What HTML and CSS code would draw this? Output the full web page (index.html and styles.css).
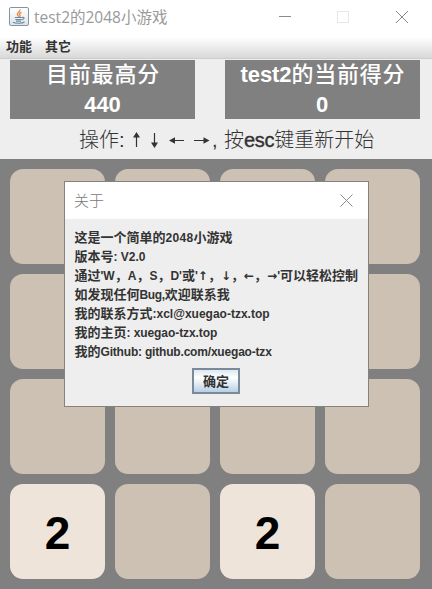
FILE: index.html
```html
<!DOCTYPE html>
<html lang="zh-CN">
<head>
<meta charset="utf-8">
<title>test2的2048小游戏</title>
<link rel="stylesheet" href="styles.css">
</head>
<body>
<div class="window">
  <header class="titlebar">
    <svg class="app-icon" viewBox="0 0 20 19">
      <defs><linearGradient id="g" x1="0" y1="0" x2="0" y2="1"><stop offset="0" stop-color="#fff"/><stop offset="1" stop-color="#dfe3e6"/></linearGradient></defs>
      <rect x=".5" y=".5" width="19" height="18" rx="1.5" fill="url(#g)" stroke="#8295a4"/>
      <path d="M10.8 2.5c1.2 2-3 3.200-2.400 5 .3 1 1.200 1.600 1.400 2.300M12.500 5.300c-2.700 1.200-2.200 2-1.500 3 .4.7-.2 1.300-.7 1.600" fill="none" stroke="#ee8a42" stroke-width="1.300"/>
      <path d="M5.800 10.500h7.400M6.300 12.500h6.200M7 14.200h5M13.300 10.400c2.400-.5 2.200 2-.6 2.500M4 15.300c2 1.300 9.500 1.300 11.500-.2" fill="none" stroke="#6689a6" stroke-width="1.200"/>
    </svg>
    <span class="title">test2的2048小游戏</span>
    <svg class="controls" viewBox="0 0 132 12">
      <path d="M0 5.500h12" stroke="#8a8a8a"/>
      <rect x="58.500" y=".5" width="11" height="11" fill="none" stroke="#e6e6e6"/>
      <path d="M117 0l12 12M129 0l-12 12" stroke="#8a8a8a"/>
    </svg>
  </header>
  <nav class="menubar"><span>功能</span><span>其它</span></nav>
  <section class="scores">
    <div class="score best"><div class="name">目前最高分</div><div class="value">440</div></div>
    <div class="score current"><div class="name"><b>test2</b>的当前得分</div><div class="value">0</div></div>
  </section>
  <p class="hint"><span class="ops">操作:</span><svg class="arrows" viewBox="0 0 82 18">
      <g fill="none" stroke="#333" stroke-width="1.200"><path d="M6.500 3v13M24.500 2v13M40 9.500h14M64 9.500h14"/></g>
      <path d="M6.500 1l3.500 5.500H3zM24.500 17l3.500-5.500h-7zM39 9.500l6-3.200v6.400zM79.500 9.500l-6-3.200v6.400z" fill="#333"/>
    </svg><span class="comma">,</span><span class="restart">按<b>esc</b>键重新开始</span></p>
  <main class="board">
    <div class="tile"></div><div class="tile"></div><div class="tile"></div><div class="tile"></div>
    <div class="tile"></div><div class="tile"></div><div class="tile"></div><div class="tile"></div>
    <div class="tile"></div><div class="tile"></div><div class="tile"></div><div class="tile"></div>
    <div class="tile two">2</div><div class="tile"></div><div class="tile two">2</div><div class="tile"></div>
  </main>
</div>
<div class="dialog">
  <div class="dialog-head"><span>关于</span>
    <svg class="close" viewBox="0 0 13 13"><path d="M.5 .5l12 12M12.500 .5l-12 12" stroke="#8a8a8a"/></svg>
  </div>
  <div class="dialog-body">
    <p>这是一个简单的<b class="num">2048</b>小游戏</p>
    <p>版本号<b>: V2.0</b></p>
    <p class="keys">通过<b>'W</b>，<b>A</b>，<b>S</b>，<b>D'</b>或<b>'</b><i>↑</i>，<i>↓</i>，<i>←</i>，<i>→</i><b>'</b>可以轻松控制</p>
    <p>如发现任何<b class="tight">Bug,</b>欢迎联系我</p>
    <p>我的联系方式<b>:xcl@xuegao-tzx.top</b></p>
    <p>我的主页<b class="site">: xuegao-tzx.top</b></p>
    <p>我的<b class="git">Github: github.com/xuegao-tzx</b></p>
    <button class="ok">确定</button>
  </div>
</div>
</body>
</html>
```
FILE: styles.css
```css
* { box-sizing: border-box; }
body { margin: 0; width: 432px; height: 589px; overflow: hidden; background: #eee; color: #333; font-family: "Liberation Sans", "Noto Sans CJK SC", sans-serif; }
p { margin: 0; }
.window { width: 432px; height: 589px; display: flex; flex-direction: column; }
.titlebar { height: 37px; flex: none; background: #fff; display: flex; align-items: flex-start; padding: 7px 21px 0 9px; }
.app-icon { width: 20px; height: 19px; }
.title { margin-left: 5px; font: 400 15.500px/21px "Open Sans", "Noto Sans CJK SC", sans-serif; color: #999; white-space: nowrap; }
.controls { width: 132px; height: 12px; margin: 4px 0 0 auto; }
.menubar { height: 22px; flex: none; background: linear-gradient(#fff, #dadada 95%); border-bottom: 1px solid #ccc; padding: 0 6px; display: flex; gap: 13px; font: 700 13px/18px "Noto Sans CJK SC", sans-serif; }
.scores { height: 60px; flex: none; padding: 1px 12px 0 10px; display: flex; justify-content: space-between; }
.score { height: 59px; background: #808080; color: #fff; text-align: center; font-size: 22px; font-weight: 700; line-height: 30px; }
.best { width: 185px; }
.current { width: 195px; }
.name { height: 30px; padding-left: 1px; font-weight: 500; letter-spacing: .8px; white-space: nowrap; }
.name b { letter-spacing: -.1px; }
.value { height: 29px; line-height: 30px; }
.current .value { padding-right: 1px; }
.hint { height: 40px; flex: none; padding-left: 79px; display: flex; font-size: 20px; line-height: 42px; font-weight: 300; white-space: nowrap; }
.ops { width: 51px; }
.arrows { width: 82px; height: 18px; margin-top: 12px; }
.comma { width: 12px; }
.restart b { font-weight: 400; letter-spacing: -.3px; -webkit-text-stroke: .4px #333; }
.board { height: 430px; background: #808080; padding: 10px; display: grid; grid-template-columns: repeat(4, 95px); grid-auto-rows: 95px; gap: 10px; }
.tile { border-radius: 13px; background: #cdc1b4; }
.two { background: #eee4da; color: #000; font-size: 46px; font-weight: 700; text-align: center; line-height: 98px; }
.dialog { position: absolute; left: 64px; top: 181px; width: 305px; height: 226px; border: 1px solid #85827e; background: #eee; }
.dialog-head { height: 37px; background: #fff; display: flex; justify-content: space-between; padding: 0 15px 0 9px; align-items: center; font: 300 15px/36px "Noto Sans CJK SC", sans-serif; color: #777; }
.dialog-head span { margin-top: -2px; }
.close { width: 13px; height: 13px; }
.dialog-body { padding: 8px 10px 0; font: 700 13px/19px "Noto Sans CJK SC", sans-serif; color: #333; }
.dialog-body p { height: 19px; margin-left: -.5px; white-space: nowrap; }
.dialog-body b { font: 700 12px/19px "Liberation Sans", sans-serif; }
.dialog-body .num { letter-spacing: .3px; }
.dialog-body .tight { letter-spacing: -.35px; }
.dialog-body .site { letter-spacing: -.08px; }
.dialog-body .git { letter-spacing: -.19px; }
.dialog-body i { font: 700 12px/19px "DejaVu Sans", sans-serif; }
.ok { display: block; width: 48px; height: 26px; margin: 8px 0 0 117px; padding: 0; border: 2px solid #7a8a99; background: linear-gradient(#dce8f2, #fff 35%, #b8cfe5); font: 700 13px/22px "Noto Sans CJK SC", sans-serif; color: #333; }
```
